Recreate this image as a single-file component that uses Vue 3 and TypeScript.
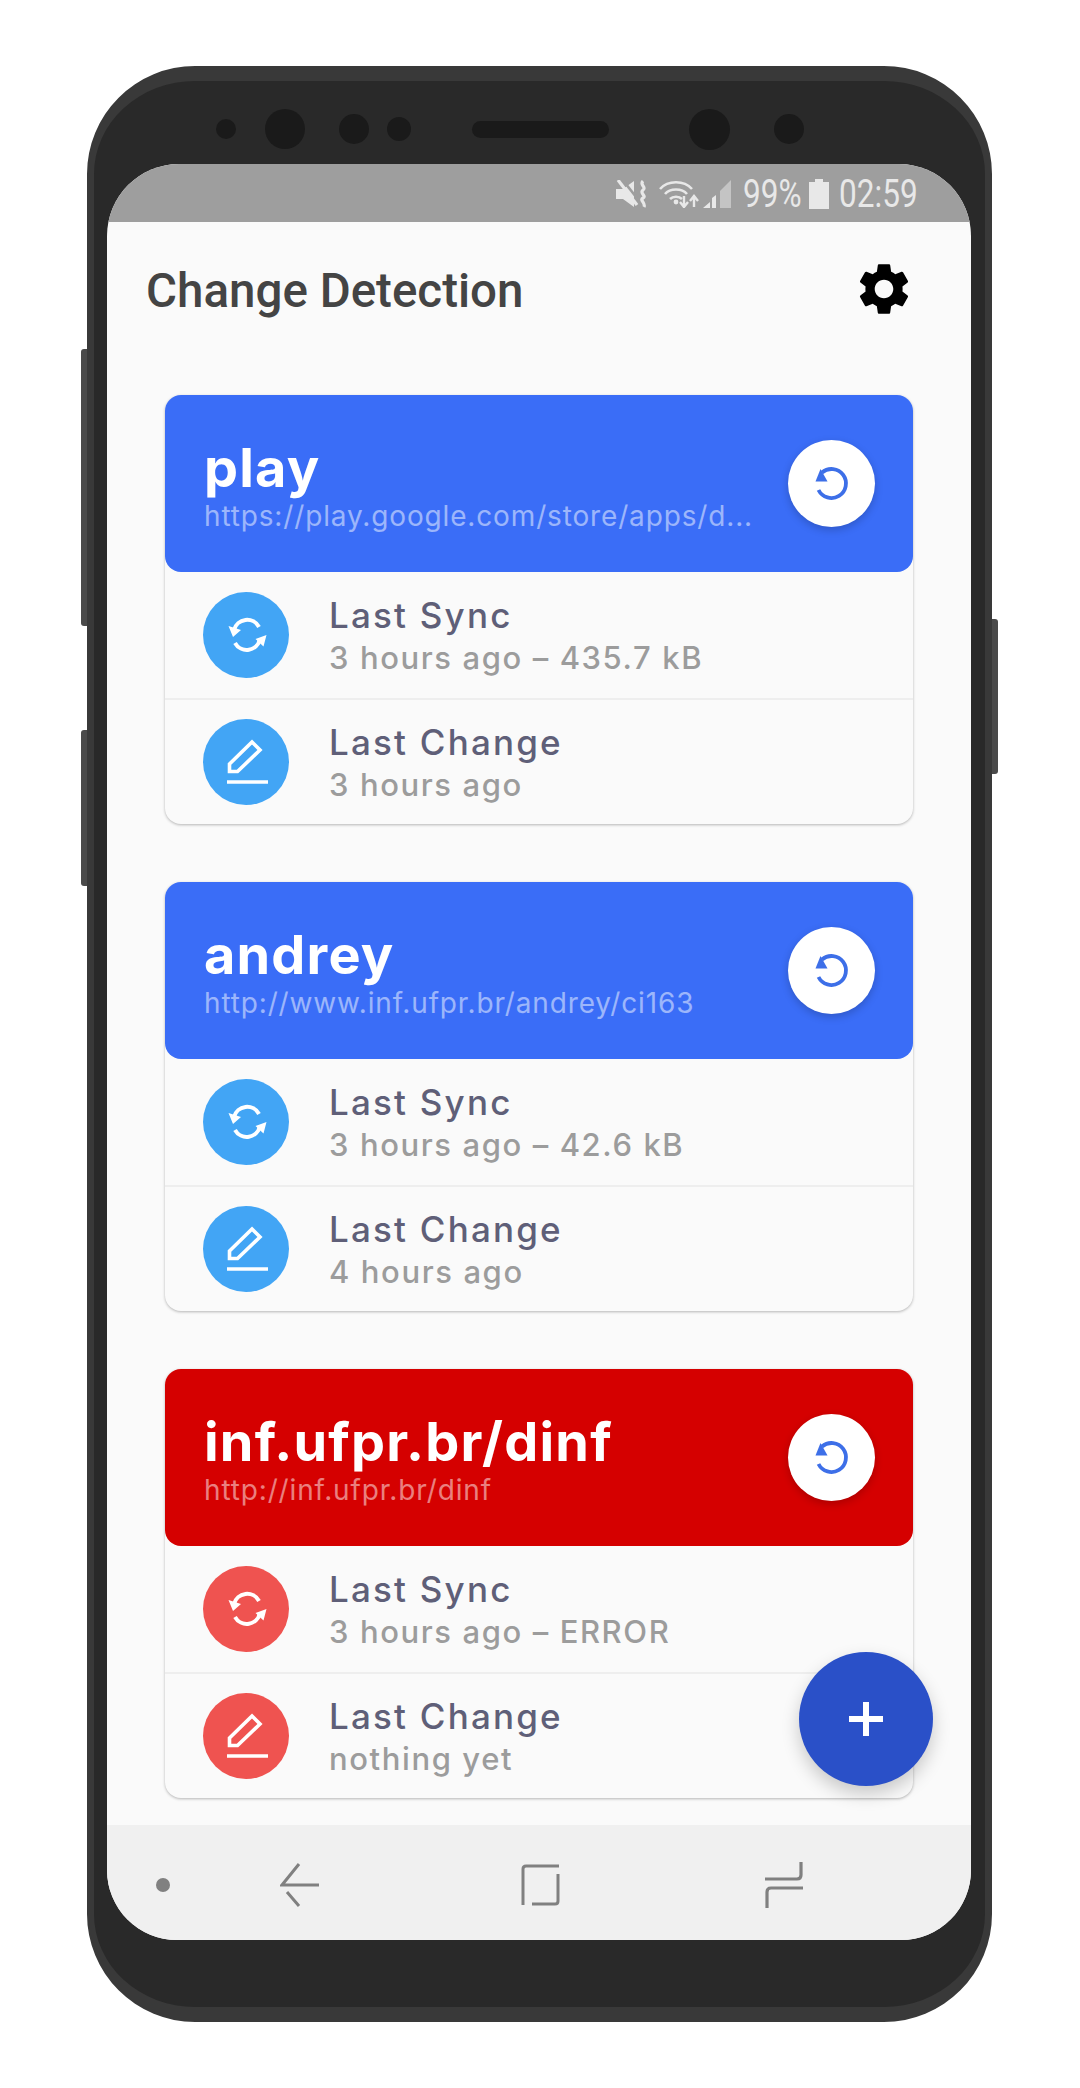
<script setup lang="ts">
interface Monitor {
  name: string
  url: string
  sync: string
  change: string
  error?: boolean
}

const monitors: Monitor[] = [
  {
    name: 'play',
    url: 'https://play.google.com/store/apps/d...',
    sync: '3 hours ago – 435.7 kB',
    change: '3 hours ago',
  },
  {
    name: 'andrey',
    url: 'http://www.inf.ufpr.br/andrey/ci163',
    sync: '3 hours ago – 42.6 kB',
    change: '4 hours ago',
  },
  {
    name: 'inf.ufpr.br/dinf',
    url: 'http://inf.ufpr.br/dinf',
    sync: '3 hours ago – ERROR',
    change: 'nothing yet',
    error: true,
  },
]
</script>

<template>
  <div class="page">
    <div class="phone">
      <span class="side-btn left-a"></span>
      <span class="side-btn left-b"></span>
      <span class="side-btn right-a"></span>

      <div class="bezel-top">
        <span class="dot d1"></span>
        <span class="dot d2"></span>
        <span class="dot d3"></span>
        <span class="dot d4"></span>
        <span class="speaker"></span>
        <span class="dot d5"></span>
        <span class="dot d6"></span>
      </div>

      <div class="screen">
        <div class="statusbar">
          <svg class="st-mute" viewBox="0 0 32 28" width="32" height="28">
            <path d="M0 9h7l11-8v26l-11-8H0z" fill="#e8e8e8" />
            <path d="M6-1l18 23" stroke="#9e9e9e" stroke-width="2.600" />
            <path d="M2 0l19 25" stroke="#e8e8e8" stroke-width="3.200" />
            <path d="M27 1c-4 4 4 6 0 9s4 6 0 8 3 5 1 9" fill="none" stroke="#e8e8e8" stroke-width="3.200" />
          </svg>
          <svg class="st-wifi" viewBox="0 0 40 28" width="40" height="28">
            <g fill="none" stroke="#e8e8e8" stroke-width="2.600">
              <path d="M1 9C9 0 25 0 33 9" />
              <path d="M6 14c5-6 17-6 22 0" />
              <path d="M11 19c3-3 9-3 12 0" />
            </g>
            <circle cx="17" cy="22" r="2.400" fill="#e8e8e8" />
            <path d="M25 16v10M21 22l4 5 4-5M35 27v-9M31 21l4-5 4 5" fill="none" stroke="#e8e8e8" stroke-width="2.400" />
          </svg>
          <svg class="st-signal" viewBox="0 0 28 28" width="28" height="28">
            <path d="M0 28l7-6v6zM9 28V18l4-3v13z" fill="#e8e8e8" />
            <path d="M17 28V11L28 0v28z" fill="#c4c4c4" />
          </svg>
          <span class="st-text pct">99%</span>
          <svg class="st-batt" viewBox="0 0 20 30" width="20" height="30">
            <path d="M6 0h8v3h6v27H0V3h6z" fill="#e8e8e8" />
          </svg>
          <span class="st-text time">02:59</span>
        </div>

        <div class="content">
          <div class="toolbar">
            <h1>Change Detection</h1>
            <svg class="gear" viewBox="0 0 24 24" width="62" height="62">
              <path d="M19.14 12.94c.04-.3.06-.61.06-.94 0-.32-.02-.64-.07-.94l2.03-1.58c.18-.14.23-.41.12-.61l-1.92-3.32c-.12-.22-.37-.29-.59-.22l-2.39.96c-.5-.38-1.03-.7-1.62-.94l-.36-2.54c-.04-.24-.24-.41-.48-.41h-3.84c-.24 0-.43.17-.47.41l-.36 2.54c-.59.24-1.13.57-1.62.94l-2.39-.96c-.22-.08-.47 0-.59.22L2.74 8.87c-.12.21-.08.47.12.61l2.03 1.58c-.05.3-.09.63-.09.94s.02.64.07.94l-2.03 1.58c-.18.14-.23.41-.12.61l1.92 3.32c.12.22.37.29.59.22l2.39-.96c.5.38 1.03.7 1.62.94l.36 2.54c.05.24.24.41.48.41h3.84c.24 0 .44-.17.47-.41l.36-2.54c.59-.24 1.13-.56 1.62-.94l2.39.96c.22.08.47 0 .59-.22l1.92-3.32c.12-.22.07-.47-.12-.61l-2.01-1.58zM12 15.6c-1.98 0-3.6-1.62-3.6-3.6s1.62-3.6 3.6-3.6 3.6 1.62 3.6 3.6-1.62 3.6-3.6 3.6z" fill="#000" />
            </svg>
          </div>

          <div class="cards">
            <div v-for="m in monitors" :key="m.name" class="card" :class="{ error: m.error }">
              <div class="card-head">
                <div class="head-text">
                  <div class="name">{{ m.name }}</div>
                  <div class="url">{{ m.url }}</div>
                </div>
                <button class="refresh">
                  <svg viewBox="0 1.5 64 64" width="64" height="64">
                    <path d="M22 22A14.5 14.5 0 1 1 18.500 39.500" fill="none" stroke="#3d6fe8" stroke-width="3.800" />
                    <path d="M20.500 18.500L15.500 31H27.500z" fill="#3d6fe8" />
                  </svg>
                </button>
              </div>

              <div class="row">
                <span class="badge">
                  <svg viewBox="0 0 60 60" width="60" height="60">
                    <g fill="none" stroke="#fff" stroke-width="4">
                      <path d="M18 25A13.500 13.500 0 0 1 43 22" />
                      <path d="M44 34A13.500 13.500 0 0 1 19 38" />
                    </g>
                    <path d="M12.500 21L25 25 17 32zM50.500 30L39.500 34l8 7.500z" fill="#fff" />
                  </svg>
                </span>
                <div class="row-text">
                  <div class="label">Last Sync</div>
                  <div class="value">{{ m.sync }}</div>
                </div>
              </div>

              <div class="row">
                <span class="badge">
                  <svg viewBox="0 0 60 60" width="60" height="60">
                    <path d="M13.500 32L36 10l8 8-22.500 21.500h-8z" fill="none" stroke="#fff" stroke-width="3.600" />
                    <path d="M11 50h41" stroke="#fff" stroke-width="3.600" />
                  </svg>
                </span>
                <div class="row-text">
                  <div class="label">Last Change</div>
                  <div class="value">{{ m.change }}</div>
                </div>
              </div>
            </div>
          </div>

          <button class="fab">
            <svg viewBox="0 0 34 34" width="34" height="34">
              <path d="M0 17h34M17 0v34" stroke="#fff" stroke-width="6" />
            </svg>
          </button>
        </div>

        <div class="navbar">
          <span class="nav-dot"></span>
          <svg class="nav-back" viewBox="0 0 40 44" width="40" height="44">
            <path d="M19 1L2 22h37M7 29l12 14" fill="none" stroke="#808080" stroke-width="3" />
          </svg>
          <svg class="nav-home" viewBox="0 0 40 42" width="40" height="42">
            <path d="M38 2H5Q2 2 2 5v36M37 10v27q0 3-3 3H11" fill="none" stroke="#808080" stroke-width="3" />
          </svg>
          <svg class="nav-recent" viewBox="0 0 38 46" width="38" height="46">
            <path d="M36 0v13q0 4-4 4H0M38 26H6q-4 0-4 4v16" fill="none" stroke="#808080" stroke-width="3.200" />
          </svg>
        </div>
      </div>
    </div>
  </div>
</template>

<style>
html, body { background: #fff; }
</style>

<style scoped>
.page { width: 1080px; height: 2088px; padding: 66px 88px 0 87px; box-sizing: border-box; background: #fff; font-family: Inter, "Open Sans", sans-serif; }

.phone {
  position: relative;
  width: 905px;
  height: 1956px;
  box-sizing: border-box;
  background: #292929;
  border: solid #393939;
  border-width: 15px 7px 15px 7px;
  border-radius: 108px;
}
.side-btn { position: absolute; width: 6px; background: #4a4a4a; }
.left-a { left: -13px; top: 268px; height: 277px; border-radius: 3px 0 0 3px; }
.left-b { left: -13px; top: 649px; height: 156px; border-radius: 3px 0 0 3px; }
.right-a { right: -13px; top: 538px; height: 155px; border-radius: 0 3px 3px 0; }

.bezel-top { display: flex; align-items: center; box-sizing: border-box; height: 83px; padding: 13px 0 0 122px; }
.dot { display: block; border-radius: 50%; background: #1a1a1a; flex-shrink: 0; }
.d1 { width: 20px; height: 20px; }
.d2 { width: 40px; height: 40px; margin-left: 29px; }
.d3 { width: 30px; height: 30px; margin-left: 34px; }
.d4 { width: 24px; height: 24px; margin-left: 18px; }
.speaker { width: 137px; height: 17px; margin-left: 61px; border-radius: 9px; background: #1a1a1a; }
.d5 { width: 41px; height: 41px; margin-left: 80px; }
.d6 { width: 30px; height: 30px; margin-left: 44px; }

.screen {
  display: flex;
  flex-direction: column;
  width: 864px;
  height: 1776px;
  margin-left: 13px;
  overflow: hidden;
  background: #fafafa;
  border-radius: 72px 72px 70px 70px;
}

.statusbar {
  display: flex;
  align-items: center;
  flex-shrink: 0;
  box-sizing: border-box;
  height: 58px;
  padding: 2px 55px 0 0;
  justify-content: flex-end;
  background: #9e9e9e;
}
.st-mute { margin-right: 11px; }
.st-wifi { margin-right: 4px; }
.st-signal { margin-right: 12px; }
.st-batt { margin: 0 10px 0 10px; }
.st-text { color: #e8e8e8; font-family: Roboto, sans-serif; font-size: 39px; line-height: 54px; }
.pct { display: block; width: 56px; white-space: nowrap; transform: scaleX(.81); transform-origin: left center; }
.time { display: block; width: 77px; white-space: nowrap; transform: scaleX(.81); transform-origin: left center; }

.content { position: relative; flex: 1; min-height: 0; }
.toolbar { display: flex; align-items: center; justify-content: space-between; height: 136px; padding: 0 56px 0 39px; }
.toolbar h1 { margin: 2px 0 0; color: #444; font-family: Roboto, sans-serif; font-size: 47.5px; font-weight: 500; }
.gear { display: block; margin-top: -2px; }

.cards { display: flex; flex-direction: column; gap: 58px; padding: 37px 58px 0; }
.card {
  flex-shrink: 0;
  background: #fafafa;
  border-radius: 16px;
  box-shadow: 0 1px 3px rgba(0, 0, 0, .28);
}
.card-head {
  display: flex;
  align-items: center;
  justify-content: space-between;
  box-sizing: border-box;
  height: 177px;
  padding: 0 38px 0 39px;
  background: #3a6df7;
  border-radius: 16px;
}
.card.error .card-head { background: #d50000; }
.head-text { min-width: 0; margin-top: 3px; }
.name { color: #fff; font-size: 54px; font-weight: 700; letter-spacing: 1.2px; line-height: 58px; white-space: nowrap; }
.url {
  margin-top: 3px;
  color: rgba(255, 255, 255, .5);
  font-size: 28px;
  letter-spacing: .85px;
  line-height: 32px;
  white-space: nowrap;
}
.refresh {
  display: flex;
  align-items: center;
  justify-content: center;
  flex-shrink: 0;
  width: 87px;
  height: 87px;
  padding: 0;
  background: #fff;
  border: none;
  border-radius: 50%;
  box-shadow: 0 3px 8px rgba(0, 0, 0, .2);
}

.row { display: flex; align-items: center; box-sizing: border-box; height: 126px; padding-left: 38px; }
.row + .row { border-top: 2px solid #eee; }
.badge {
  display: flex;
  align-items: center;
  justify-content: center;
  flex-shrink: 0;
  width: 86px;
  height: 86px;
  background: #42a5f5;
  border-radius: 50%;
}
.card.error .badge { background: #ef5350; }
.row-text { margin: 2px 0 0 40px; }
.label { color: #5f5f78; font-size: 35px; font-weight: 500; letter-spacing: 2.2px; line-height: 42px; white-space: nowrap; }
.value { margin-top: 1px; color: #9c9c9c; font-size: 31px; font-weight: 500; letter-spacing: 1.6px; line-height: 42px; white-space: nowrap; }

.fab {
  position: absolute;
  right: 38px;
  top: 1430px;
  display: flex;
  align-items: center;
  justify-content: center;
  width: 134px;
  height: 134px;
  padding: 0;
  background: #2a50c8;
  border: none;
  border-radius: 50%;
  box-shadow: 0 8px 18px rgba(0, 0, 0, .2);
}

.navbar { display: flex; align-items: center; flex-shrink: 0; box-sizing: border-box; height: 115px; padding-top: 4px; background: #f0f0f0; }
.nav-dot { width: 14px; height: 14px; margin-left: 49px; border-radius: 50%; background: #808080; }
.nav-back { margin-left: 110px; }
.nav-home { margin-left: 201px; }
.nav-recent { margin-left: 204px; }
</style>
